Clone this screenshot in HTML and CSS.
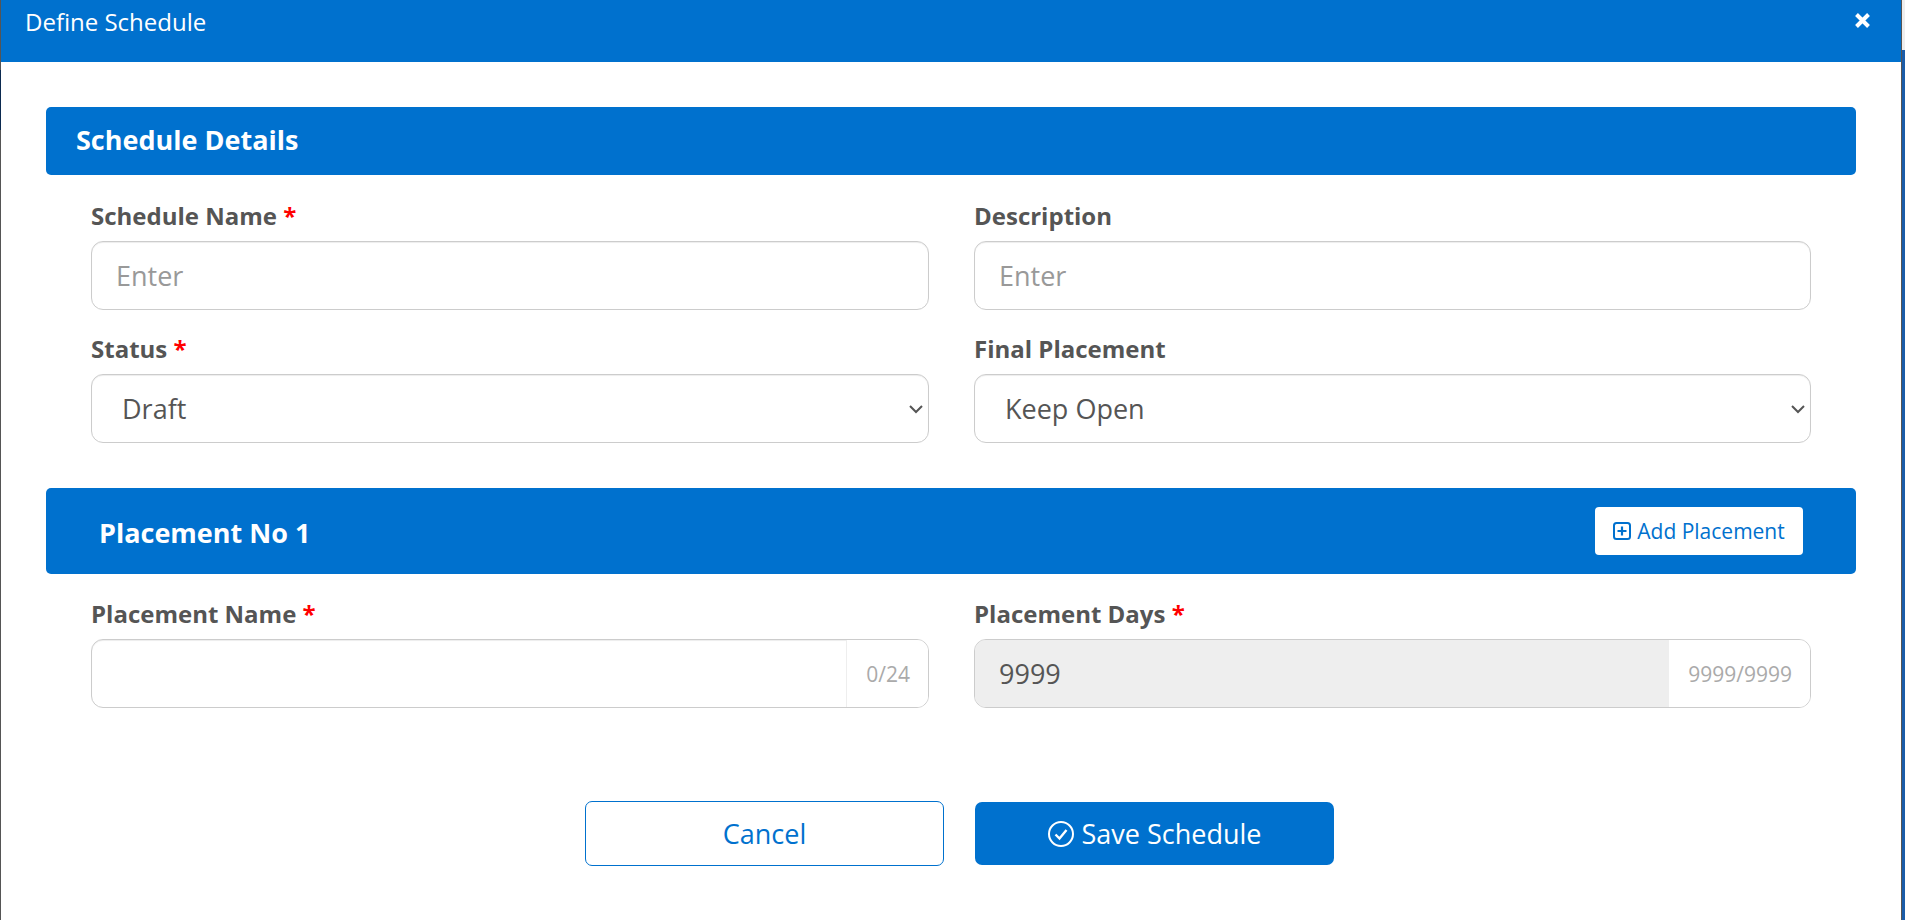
FILE: index.html
```html
<!DOCTYPE html>
<html lang="en">
<head>
<meta charset="utf-8">
<title>Define Schedule</title>
<link rel="stylesheet" href="styles.css">
</head>
<body>
<div class="page">
  <div class="edge edge-left"></div>
  <main class="modal">
    <header class="modal-head">
      <h1 class="modal-title">Define Schedule</h1>
      <button class="close" aria-label="Close">
        <svg viewBox="0 0 17 17" width="17" height="17"><path d="M2.500 2.500l12 12M14.500 2.500l-12 12" stroke="#fff" stroke-width="4" fill="none"/></svg>
      </button>
    </header>
    <div class="modal-body">
      <section class="band band-details"><h2 class="band-title">Schedule Details</h2></section>
      <div class="fields">
        <div class="field">
          <label class="label">Schedule Name <span class="req">*</span></label>
          <input class="control" placeholder="Enter">
        </div>
        <div class="field">
          <label class="label">Description</label>
          <input class="control" placeholder="Enter">
        </div>
        <div class="field">
          <label class="label">Status <span class="req">*</span></label>
          <select class="control select"><option>Draft</option></select>
        </div>
        <div class="field">
          <label class="label">Final Placement</label>
          <select class="control select"><option>Keep Open</option></select>
        </div>
      </div>
      <section class="band band-placement">
        <h2 class="band-title">Placement No 1</h2>
        <button class="add">
          <svg viewBox="0 0 18 18" width="18" height="18"><rect x="1" y="1" width="16" height="16" rx="2.500" fill="none" stroke="#0071ce" stroke-width="2"/><path d="M9 4.500v9M4.500 9h9" stroke="#0071ce" stroke-width="2.200" fill="none"/></svg>
          Add Placement
        </button>
      </section>
      <div class="fields fields-placement">
        <div class="field">
          <label class="label">Placement Name <span class="req">*</span></label>
          <div class="group">
            <input class="group-input">
            <span class="addon addon-small">0/24</span>
          </div>
        </div>
        <div class="field">
          <label class="label">Placement Days <span class="req">*</span></label>
          <div class="group">
            <input class="group-input is-disabled" value="9999" disabled>
            <span class="addon addon-large">9999/9999</span>
          </div>
        </div>
      </div>
      <div class="actions">
        <button class="btn btn-outline">Cancel</button>
        <button class="btn btn-solid">
          <svg viewBox="0 0 26 26" width="26" height="26"><circle cx="13" cy="13" r="12" fill="none" stroke="#fff" stroke-width="2"/><path d="M7.500 13.500l4 4 7-8.500" fill="none" stroke="#fff" stroke-width="2.400"/></svg>
          Save Schedule
        </button>
      </div>
    </div>
  </main>
  <div class="edge edge-right"></div>
</div>
</body>
</html>
```

FILE: styles.css
```css
* { box-sizing: border-box; }
html, body { margin: 0; height: 100%; overflow: hidden; }
body { font-family: "Open Sans", "Noto Sans", sans-serif; color: #555; background: #fff; }
.page { display: flex; height: 920px; }
.edge { flex: none; }
.edge-left { width: 1px; background: linear-gradient(#555 0 70px, #0b2a50 70px 130px, #555 130px); }
.edge-right { width: 4px; border-left: 1px solid #555; background: linear-gradient(#eee 0 50px, #1b5ca8 50px); }
.modal { flex: 1; min-width: 0; display: flex; flex-direction: column; background: #fff; }
.modal-head { flex: none; height: 62px; background: #0071ce; display: flex; justify-content: space-between; align-items: flex-start; padding: 0 30px 0 24px; }
.modal-title { margin: 5px 0 0; font-size: 24px; line-height: 33px; font-weight: 400; color: #fff; }
.close { background: none; border: 0; padding: 0; margin-top: 12px; width: 17px; height: 17px; display: block; }
.close svg { display: block; }
.modal-body { padding: 45px 45px 0 45px; }
.band { background: #0071ce; border-radius: 5px; color: #fff; display: flex; align-items: center; justify-content: space-between; }
.band-title { margin: 0; font-size: 27px; line-height: 36px; font-weight: 700; color: #fff; }
.band-details { height: 68px; padding-left: 30px; }
.band-details .band-title { margin-bottom: 2px; }
.band-placement { height: 86px; padding: 0 53px 0 53px; margin-top: 45px; }
.band-placement .band-title { margin-top: 4px; }
.add { height: 48px; width: 208px; background: #fff; border: 0; border-radius: 4px; color: #0071ce; font: 400 21px "Open Sans", sans-serif; display: flex; align-items: center; justify-content: center; gap: 6px; padding: 0; }
.fields { display: grid; grid-template-columns: 838px 837px; column-gap: 45px; row-gap: 22px; padding: 0 45px; margin-top: 24px; }
.fields-placement { margin-top: 23px; }
.label { display: block; font-size: 24px; line-height: 33px; font-weight: 700; color: #555; margin-bottom: 9px; }
.req { color: #f00; }
.control { display: block; width: 100%; height: 69px; border: 1px solid #ccc; border-radius: 12px; background: #fff; font: 400 27px "Open Sans", sans-serif; color: #555; padding: 0 24px; outline: 0; box-shadow: inset 0 1px 1px rgba(0,0,0,.075); }
.control::placeholder { color: #999; opacity: 1; }
.select { appearance: none; padding-left: 30px; background: #fff url("data:image/svg+xml,%3Csvg xmlns='http://www.w3.org/2000/svg' width='14' height='10' viewBox='0 0 14 10'%3E%3Cpath d='M1 2l6 6 6-6' fill='none' stroke='%23555' stroke-width='2'/%3E%3C/svg%3E") no-repeat right 5px center; }
.group { display: flex; height: 69px; border: 1px solid #ccc; border-radius: 12px; overflow: hidden; box-shadow: inset 0 1px 1px rgba(0,0,0,.075); }
.group-input { flex: 1; min-width: 0; border: 0; background: transparent; font: 400 27px "Open Sans", sans-serif; color: #555; padding: 0 24px; outline: 0; }
.is-disabled { background: #eee; color: #555; -webkit-text-fill-color: #555; opacity: 1; }
.addon { flex: none; border-left: 1px solid #eee; background: #fff; color: #aaa; font-size: 21px; display: flex; align-items: center; justify-content: flex-end; padding-right: 18px; }
.addon-small { width: 82px; }
.addon-large { width: 142px; }
.actions { display: flex; justify-content: center; gap: 31px; margin-top: 93px; padding-left: 17px; }
.btn { width: 359px; border-radius: 7px; font: 400 27px "Open Sans", sans-serif; display: flex; align-items: center; justify-content: center; gap: 8px; padding: 0; }
.btn-outline { height: 65px; background: #fff; border: 1px solid #0071ce; color: #0071ce; }
.btn-solid { height: 63px; margin-top: 1px; background: #0071ce; border: 0; color: #fff; }
```
